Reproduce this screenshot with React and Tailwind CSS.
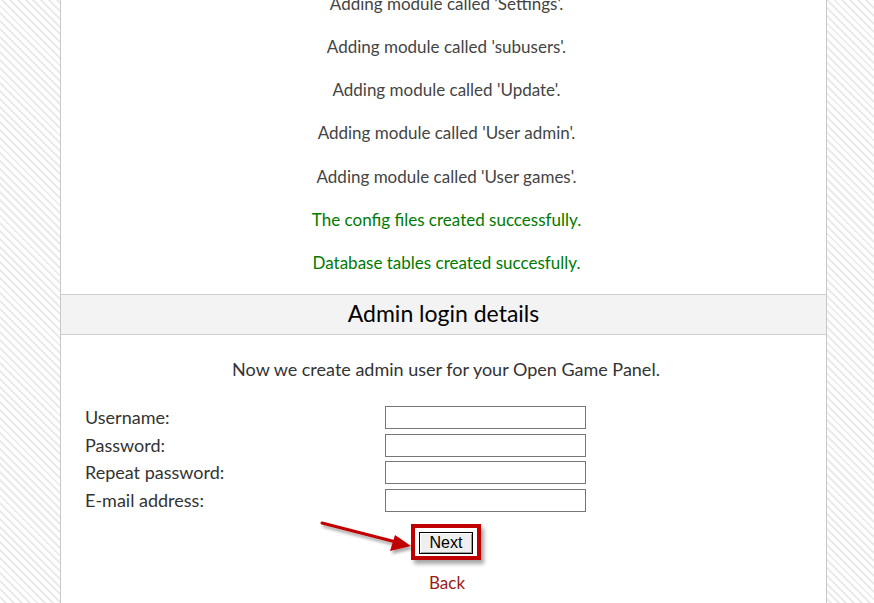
import React from "react";

const lines = [
  { t: "Adding module called 'Settings'.", g: false },
  { t: "Adding module called 'subusers'.", g: false },
  { t: "Adding module called 'Update'.", g: false },
  { t: "Adding module called 'User admin'.", g: false },
  { t: "Adding module called 'User games'.", g: false },
  { t: "The config files created successfully.", g: true },
  { t: "Database tables created succesfully.", g: true },
];

const fields = ["Username:", "Password:", "Repeat password:", "E-mail address:"];

export default function App() {
  return (
    <div
      className="w-[874px] h-[603px] overflow-hidden flex bg-[repeating-linear-gradient(45deg,#ffffff_0px,#ffffff_3.5px,#ebebeb_3.5px,#ebebeb_5.5px)]"
      style={{ fontFamily: "'Lato', 'Open Sans', sans-serif" }}
    >
      <div className="w-[60px] shrink-0" />
      <div className="w-[767px] shrink-0 bg-white border-x border-[#c8c8c8] relative flex flex-col">
        <div className="-mt-[18px] pl-[6px] flex flex-col">
          {lines.map((l, i) => (
            <div
              key={i}
              className={`h-[43.2px] flex items-center justify-center text-[17px] ${
                l.g ? "text-[#007a00]" : "text-[#444]"
              }`}
            >
              {l.t}
            </div>
          ))}
        </div>
        <div className="mt-[10px] h-[41px] pb-[3px] bg-[#f3f3f3] border-y border-[#cfcfcf] flex items-center justify-center text-[23px] text-black">
          Admin login details
        </div>
        <div className="mt-[21px] pl-[5px] text-center text-[18px] text-[#333]">
          Now we create admin user for your Open Game Panel.
        </div>
        <div className="mt-[23px] flex flex-col gap-[5px] pl-[24px]">
          {fields.map((f) => (
            <div key={f} className="flex items-center h-[22.5px]">
              <div className="w-[300px] text-[18px] text-[#333]">{f}</div>
              <input
                type="text"
                className="w-[201px] h-[23px] border border-[#767676] bg-white outline-none"
              />
            </div>
          ))}
        </div>
        <div className="mt-[13px] flex justify-center">
          <div className="ml-[5px] border-[4px] border-[#c00000] px-[4px] py-[2px] shadow-[3px_4px_4px_rgba(0,0,0,0.35)]">
            <button
              className="h-[22px] px-[10px] bg-[#efefef] border border-black text-[16px] text-black leading-none shadow-[inset_1px_1px_0_#fff,inset_-1px_-1px_0_#a0a0a0]"
              style={{ fontFamily: "'Liberation Sans', Arial, sans-serif" }}
            >
              Next
            </button>
          </div>
        </div>
        <div className="mt-[10px] ml-[7px] text-center text-[17px] text-[#9b1c1c]">Back</div>

        <svg
          className="absolute left-[255px] top-[515px]"
          width="100"
          height="45"
          viewBox="0 0 100 45"
        >
          <defs>
            <filter id="sh" x="-20%" y="-20%" width="150%" height="160%">
              <feDropShadow dx="2" dy="3" stdDeviation="1.5" floodColor="#000" floodOpacity="0.35" />
            </filter>
          </defs>
          <g filter="url(#sh)">
            <line x1="6" y1="8" x2="80" y2="27" stroke="#c00000" strokeWidth="3" strokeLinecap="round" />
            <polygon points="95,31 74,36 79,20" fill="#c00000" />
          </g>
        </svg>
      </div>
    </div>
  );
}
